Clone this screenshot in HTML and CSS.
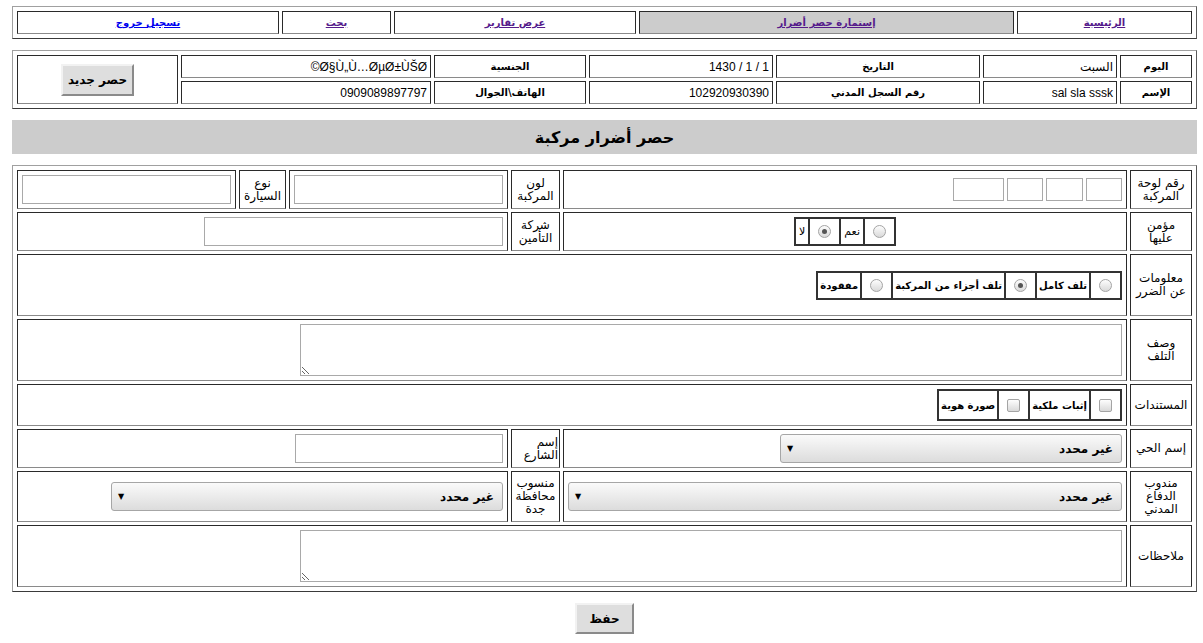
FILE: index.html
```html
<!DOCTYPE html>
<html lang="ar" dir="rtl">
<head>
<meta charset="utf-8">
<title>حصر أضرار مركبة</title>
<link rel="stylesheet" href="styles.css">
</head>
<body>
<div class="box nav">
  <div class="cell"><a href="#" class="visited">الرئيسية</a></div>
  <div class="cell current"><a href="#" class="visited">إستمارة حصر أضرار</a></div>
  <div class="cell"><a href="#" class="visited">عرض تقارير</a></div>
  <div class="cell"><a href="#" class="visited">بحث</a></div>
  <div class="cell"><a href="#" class="fresh">تسجيل خروج</a></div>
</div>

<div class="box info">
  <div class="cell head">اليوم</div>
  <div class="cell val">السبت</div>
  <div class="cell head">التاريخ</div>
  <div class="cell val">1 / 1 / 1430</div>
  <div class="cell head">الجنسية</div>
  <div class="cell val">Ø§Ù„Ù…ØµØ±ÙŠØ©</div>
  <div class="cell btn-cell"><button class="btn btn-new" type="button">حصر جديد</button></div>
  <div class="cell head">الإسم</div>
  <div class="cell val">sal sla sssk</div>
  <div class="cell head">رقم السجل المدني</div>
  <div class="cell val">102920930390</div>
  <div class="cell head">الهاتف\الجوال</div>
  <div class="cell val">0909089897797</div>
</div>

<h1 class="title">حصر أضرار مركبة</h1>

<div class="box form">
  <!-- row 1 -->
  <div class="cell lbl">رقم لوحة المركبة</div>
  <div class="cell fld">
    <div class="plate">
      <input class="txt p1" type="text">
      <input class="txt p2" type="text">
      <input class="txt p1" type="text">
      <input class="txt p4" type="text">
    </div>
  </div>
  <div class="cell lbl">لون المركبة</div>
  <div class="cell fld"><input class="txt full" type="text"></div>
  <div class="cell lbl">نوع السيارة</div>
  <div class="cell fld"><input class="txt full" type="text"></div>

  <!-- row 2 -->
  <div class="cell lbl">مؤمن عليها</div>
  <div class="cell fld center">
    <div class="opts">
      <div class="opt ctl"><span class="radio"></span></div>
      <div class="opt">نعم</div>
      <div class="opt ctl"><span class="radio on"></span></div>
      <div class="opt">لا</div>
    </div>
  </div>
  <div class="cell lbl">شركة التأمين</div>
  <div class="cell fld span3"><input class="txt w299" type="text"></div>

  <!-- row 3 -->
  <div class="cell lbl">معلومات عن الضرر</div>
  <div class="cell fld span5">
    <div class="opts bold">
      <div class="opt ctl"><span class="radio"></span></div>
      <div class="opt">تلف كامل</div>
      <div class="opt ctl"><span class="radio on"></span></div>
      <div class="opt">تلف أجزاء من المركبة</div>
      <div class="opt ctl"><span class="radio"></span></div>
      <div class="opt">مفقودة</div>
    </div>
  </div>

  <!-- row 4 -->
  <div class="cell lbl">وصف التلف</div>
  <div class="cell fld span5"><textarea class="area"></textarea></div>

  <!-- row 5 -->
  <div class="cell lbl">المستندات</div>
  <div class="cell fld span5">
    <div class="opts bold tall">
      <div class="opt ctl"><span class="check"></span></div>
      <div class="opt">إثبات ملكية</div>
      <div class="opt ctl"><span class="check"></span></div>
      <div class="opt">صورة هوية</div>
    </div>
  </div>

  <!-- row 6 -->
  <div class="cell lbl">إسم الحي</div>
  <div class="cell fld"><div class="sel w342"><span>غير محدد</span><span class="arrow">▼</span></div></div>
  <div class="cell lbl start">إسم الشارع</div>
  <div class="cell fld span3"><input class="txt w208" type="text"></div>

  <!-- row 7 -->
  <div class="cell lbl">مندوب الدفاع المدني</div>
  <div class="cell fld"><div class="sel grow"><span>غير محدد</span><span class="arrow">▼</span></div></div>
  <div class="cell lbl">منسوب محافظة جدة</div>
  <div class="cell fld span3"><div class="sel w392"><span>غير محدد</span><span class="arrow">▼</span></div></div>

  <!-- row 8 -->
  <div class="cell lbl">ملاحظات</div>
  <div class="cell fld span5"><textarea class="area"></textarea></div>
</div>

<div class="actions"><button class="btn btn-save" type="button">حفظ</button></div>
</body>
</html>
```

FILE: styles.css
```css
* { box-sizing: border-box; }

body {
  margin: 0;
  padding: 6px 6px 0 12px;
  font-family: "Liberation Sans", "DejaVu Sans", sans-serif;
  font-size: 12px;
  color: #000;
  background: #fff;
}

.box {
  display: grid;
  gap: 3px;
  padding: 4px;
  border: 1px solid;
  border-color: #a0a0a0 #5a5a5a #3a3a3a #a0a0a0;
}

.cell {
  border: 1px solid #2a2a2a;
  border-bottom-color: #8a8a8a;
}

/* navigation */
.nav {
  grid-template-columns: 175px 375px 242px 109px 262px;
  grid-auto-rows: 23px;
}
.nav .cell {
  display: flex;
  align-items: center;
  justify-content: center;
}
.nav .current { background: #cccccc; }
.nav a {
  font-family: "DejaVu Sans", sans-serif;
  font-weight: bold;
  font-size: 10px;
  text-decoration: underline;
}
.nav a.visited { color: #551a8b; }
.nav a.fresh { color: #0000ee; }

/* info */
.info {
  margin-top: 11px;
  grid-template-columns: 72px 134px 204px 184px 152px 250px 161px;
  grid-template-rows: 23px 23px;
}
.head {
  display: flex;
  align-items: center;
  justify-content: center;
  font-family: "DejaVu Sans", sans-serif;
  font-weight: bold;
  font-size: 10px;
}
.val {
  display: flex;
  align-items: center;
  justify-content: flex-start;
  padding: 0 3px;
  font-size: 12px;
  white-space: nowrap;
  overflow: hidden;
}
.btn-cell {
  grid-column: 7;
  grid-row: 1 / span 2;
  display: flex;
  align-items: center;
  justify-content: center;
}

.btn {
  font-family: "DejaVu Sans", sans-serif;
  font-weight: bold;
  font-size: 12px;
  color: #000;
  background: #dedede;
  border: 2px solid;
  border-color: #f2f2f2 #8a8a8a #8a8a8a #f2f2f2;
  padding: 0;
}
.btn-new { width: 73px; height: 32px; }
.btn-save { width: 59px; height: 31px; }

/* title */
.title {
  margin: 11px 0 0;
  height: 34px;
  background: #cccccc;
  display: flex;
  align-items: center;
  justify-content: center;
  font-family: "DejaVu Sans", sans-serif;
  font-weight: bold;
  font-size: 16px;
}

/* form */
.form {
  margin-top: 11px;
  grid-template-columns: 62px 564px 49px 219px 47px 219px;
  grid-template-rows: 39px 39px 62px 62px 42px 39px 51px 62px;
}
.lbl {
  display: flex;
  align-items: center;
  justify-content: center;
  text-align: center;
  padding: 0 3px;
  font-family: "DejaVu Sans", sans-serif;
  font-size: 12px;
  line-height: 13px;
}
.lbl.start { text-align: right; justify-content: flex-start; padding: 0 1px; }
.fld {
  display: flex;
  align-items: center;
  justify-content: flex-start;
  padding: 4px;
}
.fld.center { justify-content: center; }
.span5 { grid-column: 2 / 7; }
.span3 { grid-column: 4 / 7; }

.txt {
  border: 1px solid #a9a9a9;
  border-radius: 0;
  background: #fff;
  padding: 0 2px;
  margin: 0;
  font: 12px "Liberation Sans", sans-serif;
  align-self: stretch;
  height: auto;
}
.full { width: 100%; }
.w299 { width: 299px; }
.w208 { width: 208px; }

.plate {
  display: flex;
  gap: 3px;
}
.plate .txt { height: 23px; align-self: center; }
.p1 { width: 36px; }
.p2 { width: 37px; }
.p4 { width: 51px; }

.area {
  width: 822px;
  height: 52px;
  border: 1px solid #a9a9a9;
  border-radius: 0;
  margin: 0;
  padding: 2px;
  font: 12px "Liberation Sans", sans-serif;
}

/* option groups */
.opts {
  display: inline-flex;
  height: 29px;
  border: 1px solid #333;
}
.opts.tall { height: 32px; }
.opt {
  display: flex;
  align-items: center;
  justify-content: center;
  border: 1px solid #333;
  padding: 0 3px;
  font-family: "DejaVu Sans", sans-serif;
  font-size: 11px;
  white-space: nowrap;
}
.opts.bold .opt { font-weight: bold; font-size: 10px; padding: 0 2px; }
.opt.ctl, .opts.bold .opt.ctl { width: 31px; padding: 0; }

.radio {
  position: relative;
  display: block;
  width: 13px;
  height: 13px;
  border-radius: 50%;
  border: 1px solid #a4a4a4;
  background: linear-gradient(#fdfdfd, #d9d9d9);
}
.radio.on::after {
  content: "";
  position: absolute;
  left: 3px;
  top: 3px;
  width: 5px;
  height: 5px;
  border-radius: 50%;
  background: #555;
}
.check {
  display: block;
  width: 13px;
  height: 13px;
  border-radius: 2px;
  border: 1px solid #a4a4a4;
  background: linear-gradient(#fdfdfd, #d9d9d9);
}

/* select look-alike */
.sel {
  height: 29px;
  display: flex;
  align-items: center;
  justify-content: space-between;
  padding: 0 8px 0 6px;
  border: 1px solid #a6a6a6;
  border-radius: 3px;
  background: linear-gradient(#fafafa, #dcdcdc);
  font-family: "DejaVu Sans", sans-serif;
  font-weight: bold;
  font-size: 12px;
}
.sel .arrow { font-size: 8px; font-weight: normal; }
.w342 { width: 342px; }
.w392 { width: 392px; }
.grow { width: 100%; }

.actions {
  margin-top: 11px;
  display: flex;
  justify-content: center;
}
```
